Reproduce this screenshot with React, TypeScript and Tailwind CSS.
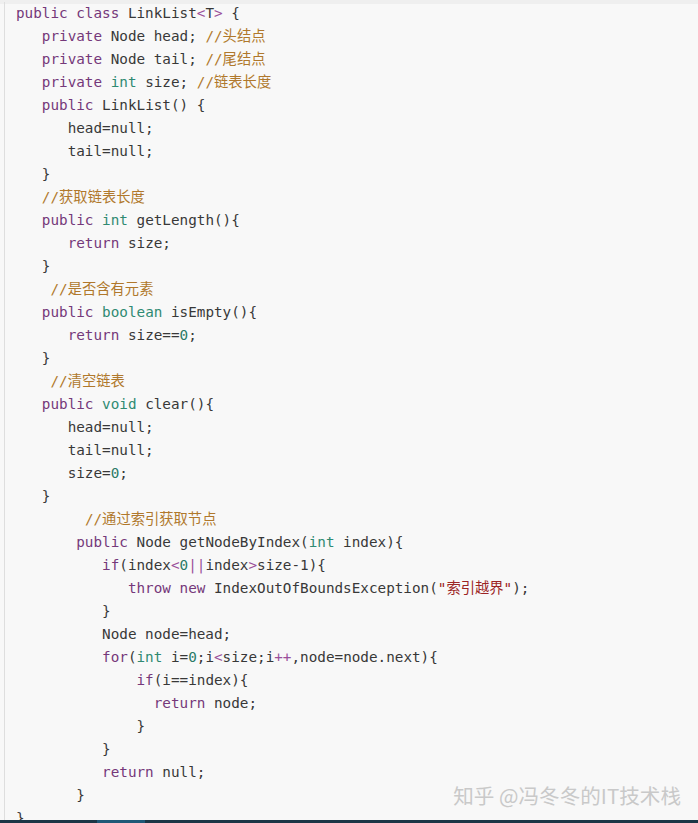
import React from 'react';

type Tok = [string, string?];

// token colours (CodeMirror-ish, toned down like the screenshot)
const K = 'text-[#75387a]'; // keyword
const T = 'text-[#2f8a72]'; // type
const C = 'text-[#b0782c]'; // comment
const S = 'text-[#9c2424]'; // string
const N = 'text-[#2a7a66]'; // number
const O = 'text-[#9a4f9a]'; // operator

const lines: { indent: number; toks: Tok[] }[] = [
    { indent: 0, toks: [['public class', K], [' LinkList'], ['<', O], ['T'], ['>', O], [' {']] },
    { indent: 3, toks: [['private', K], [' Node head; '], ['//头结点', C]] },
    { indent: 3, toks: [['private', K], [' Node tail; '], ['//尾结点', C]] },
    { indent: 3, toks: [['private', K], [' '], ['int', T], [' size; '], ['//链表长度', C]] },
    { indent: 3, toks: [['public', K], [' LinkList() {']] },
    { indent: 6, toks: [['head=null;']] },
    { indent: 6, toks: [['tail=null;']] },
    { indent: 3, toks: [['}']] },
    { indent: 3, toks: [['//获取链表长度', C]] },
    { indent: 3, toks: [['public', K], [' '], ['int', T], [' getLength(){']] },
    { indent: 6, toks: [['return', K], [' size;']] },
    { indent: 3, toks: [['}']] },
    { indent: 4, toks: [['//是否含有元素', C]] },
    { indent: 3, toks: [['public', K], [' '], ['boolean', T], [' isEmpty(){']] },
    { indent: 6, toks: [['return', K], [' size=='], ['0', N], [';']] },
    { indent: 3, toks: [['}']] },
    { indent: 4, toks: [['//清空链表', C]] },
    { indent: 3, toks: [['public', K], [' '], ['void', T], [' clear(){']] },
    { indent: 6, toks: [['head=null;']] },
    { indent: 6, toks: [['tail=null;']] },
    { indent: 6, toks: [['size='], ['0', N], [';']] },
    { indent: 3, toks: [['}']] },
    { indent: 8, toks: [['//通过索引获取节点', C]] },
    { indent: 7, toks: [['public', K], [' Node getNodeByIndex('], ['int', T], [' index){']] },
    { indent: 10, toks: [['if', K], ['(index'], ['<', O], ['0', N], ['||', O], ['index'], ['>', O], ['size-1){']] },
    { indent: 13, toks: [['throw new', K], [' IndexOutOfBoundsException('], ['"索引越界"', S], [');']] },
    { indent: 10, toks: [['}']] },
    { indent: 10, toks: [['Node node=head;']] },
    { indent: 10, toks: [['for', K], ['('], ['int', T], [' i='], ['0', N], [';i'], ['<', O], ['size;i'], ['++', O], [',node=node.next){']] },
    { indent: 14, toks: [['if', K], ['(i==index){']] },
    { indent: 16, toks: [['return', K], [' node;']] },
    { indent: 14, toks: [['}']] },
    { indent: 10, toks: [['}']] },
    { indent: 10, toks: [['return', K], [' null;']] },
    { indent: 7, toks: [['}']] },
    { indent: 0, toks: [['}']] },
];

const CodeLine = ({ indent, toks }: { indent: number; toks: Tok[] }) => (
    <div className="h-[23px] leading-[23px] whitespace-pre">
        {' '.repeat(indent)}
        {toks.map(([text, cls], i) => (
            <span key={i} className={cls}>{text}</span>
        ))}
    </div>
);

export default function App() {
    return (
        <div className="relative w-full h-[823px] overflow-hidden bg-[#f8f8f8] flex flex-col">
            <div className="h-[4px] shrink-0 bg-[#efefef]" />
            <div className="flex-1 ml-1 -mt-[2px] border-l border-[#dedede] pl-[11px] text-[14.3px] text-[#383838] font-['DejaVu_Sans_Mono','Noto_Sans_CJK_SC',monospace]">
                {lines.map((l, i) => (
                    <CodeLine key={i} indent={l.indent} toks={l.toks} />
                ))}
            </div>

            {/* watermark */}
            <div className="absolute right-[17px] bottom-[17px] text-[20.6px] leading-none text-[#c9c9c9] font-['Noto_Sans_CJK_SC',sans-serif] whitespace-pre">
                知乎 @冯冬冬的IT技术栈
            </div>

            {/* bottom bar */}
            <div className="absolute left-0 right-0 bottom-0 h-[3px] bg-[#1b3646] flex">
                <div className="ml-[97px] w-[48px] bg-[#1f5877]" />
            </div>
        </div>
    );
}
